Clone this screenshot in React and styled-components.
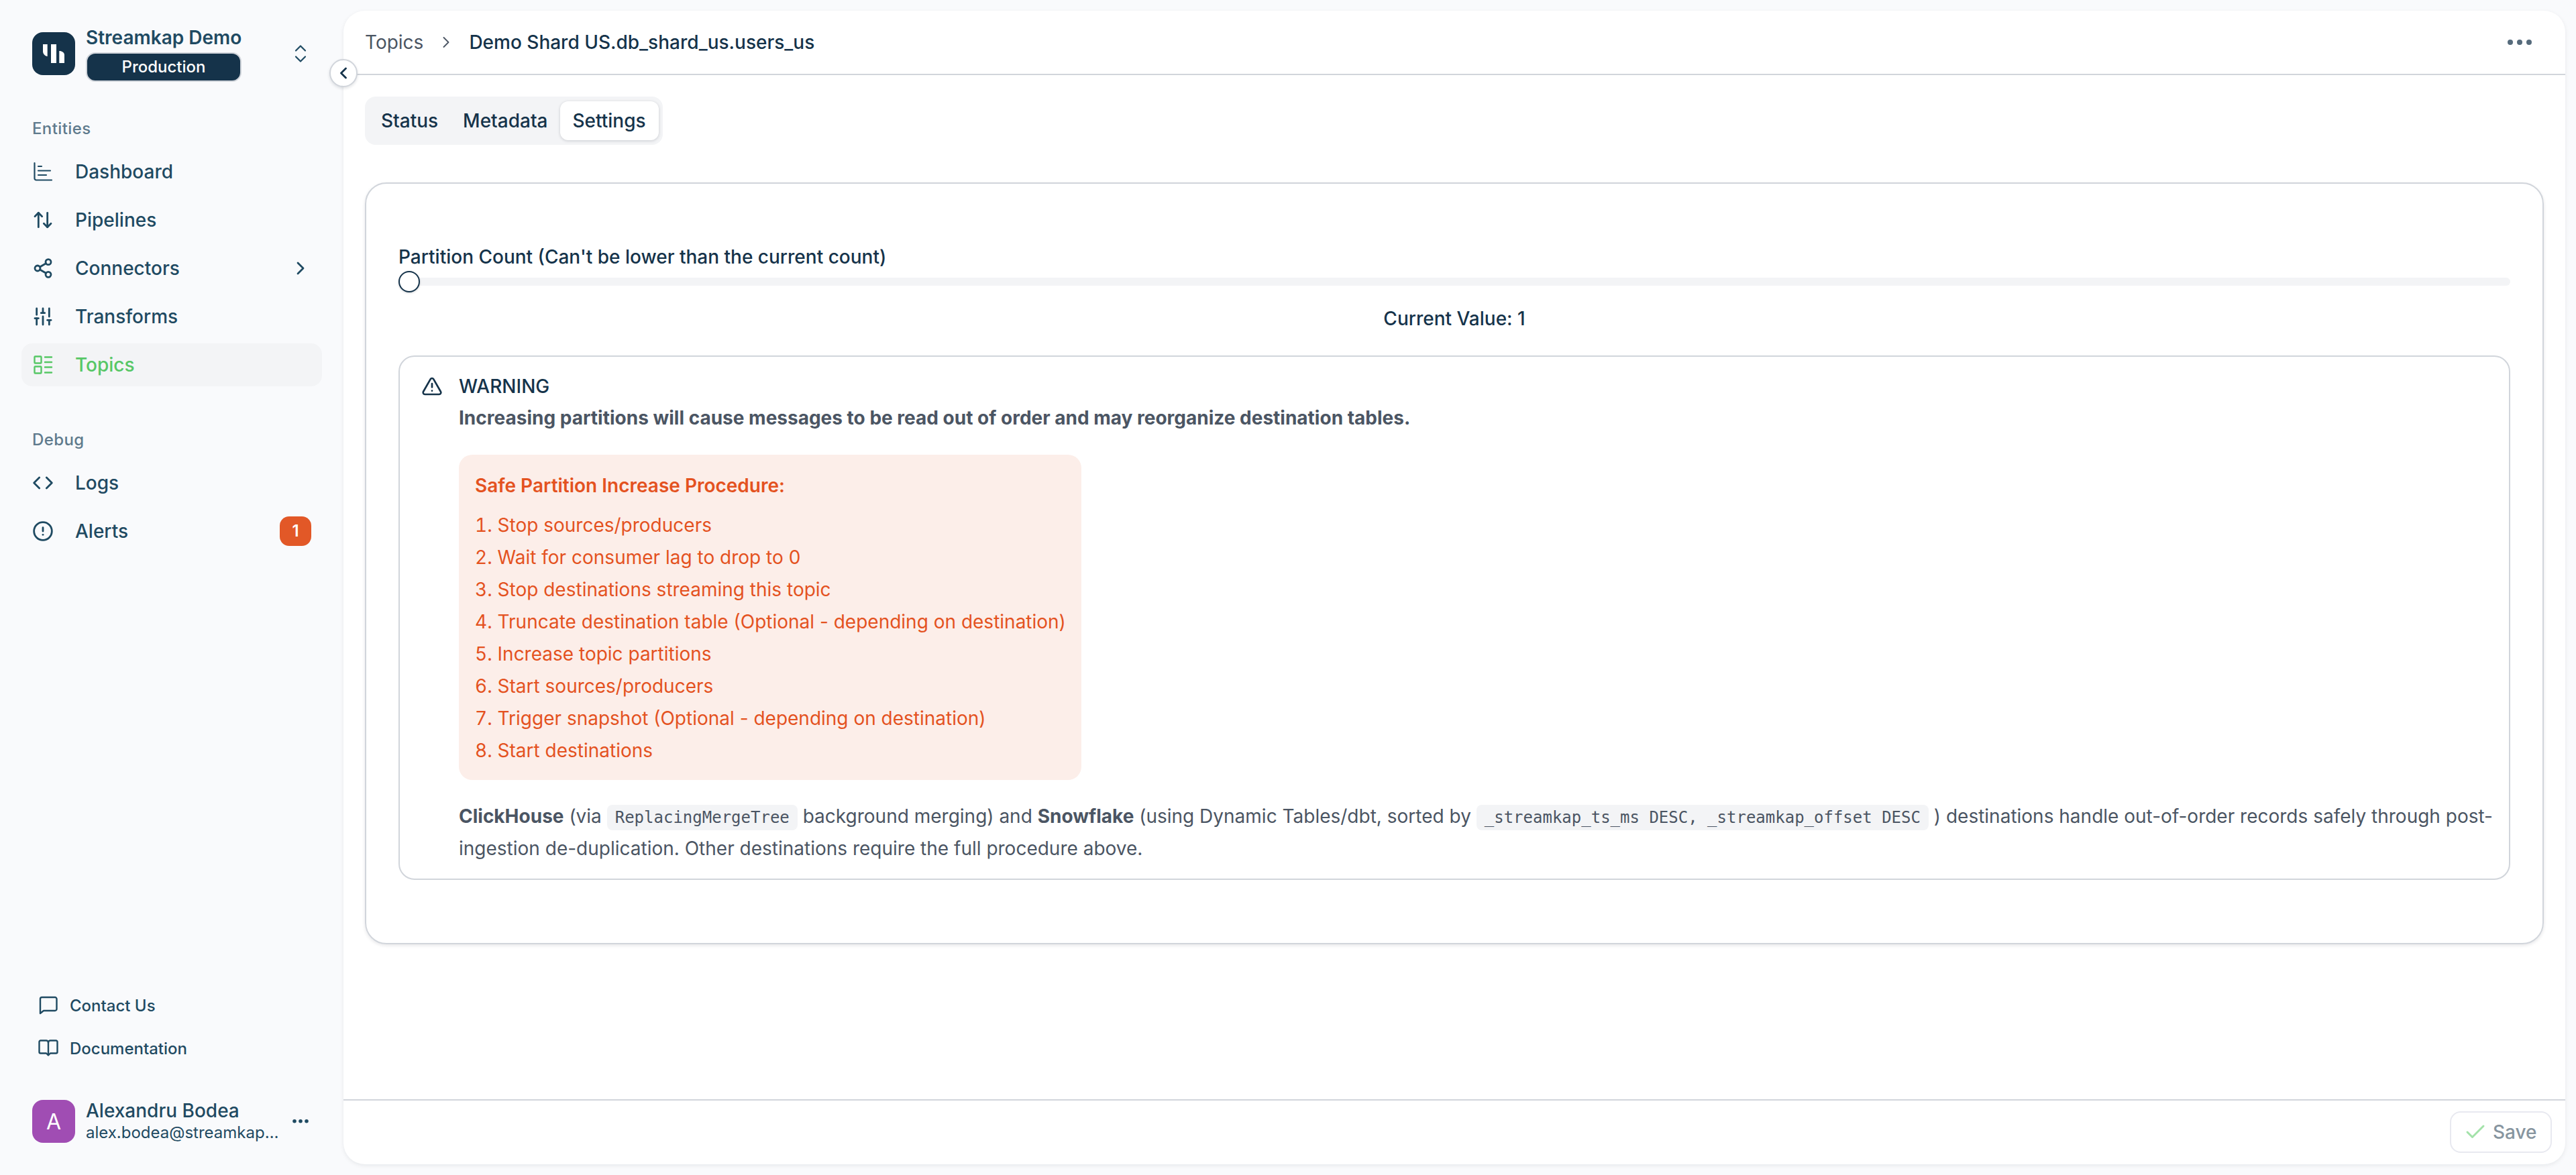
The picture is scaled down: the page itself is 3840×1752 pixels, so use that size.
import React from 'react';
import styled, { createGlobalStyle } from 'styled-components';
import {
  ArrowUpDown,
  Check,
  ChevronLeft,
  ChevronRight,
  CircleAlert,
  Code,
  SlidersVertical,
  Share2,
  TriangleAlert,
} from 'lucide-react';

const navy = '#1f4a62';
const dark = '#15334a';

const GlobalStyle = createGlobalStyle`
  html, body {
    margin: 0;
    padding: 0;
    background: #f9fafc;
    font-family: Inter, "Liberation Sans", sans-serif;
  }
  * { box-sizing: border-box; }
`;

const Shell = styled.div`
  position: relative;
  display: flex;
  width: 100%;
  height: 100vh;
  overflow: hidden;
  background: #f9fafc;
`;

const Sidebar = styled.aside`
  display: flex;
  flex-direction: column;
  flex: 0 0 512px;
  padding: 32px 32px 48px;
  color: ${navy};
`;

const Org = styled.div`
  display: flex;
  align-items: center;
  gap: 16px;
  padding: 0 16px;
  height: 96px;
  margin-bottom: 44px;
`;

const LogoBox = styled.div`
  flex: 0 0 64px;
  width: 64px;
  height: 64px;
  border-radius: 16px;
  background: ${(p) => p.$bg};
  color: #fff;
  display: flex;
  align-items: center;
  justify-content: center;
  font-size: 32px;
`;

const OrgText = styled.div`
  display: flex;
  flex-direction: column;
  width: 232px;
  margin-top: -2px;
`;

const OrgName = styled.div`
  font-size: 28px;
  line-height: 40px;
  font-weight: 600;
  white-space: nowrap;
  color: ${navy};
`;

const EnvBadge = styled.div`
  height: 44px;
  margin-top: 2px;
  border: 2px solid #d1d5db;
  border-radius: 14px;
  background: ${dark};
  color: #fff;
  font-size: 24px;
  font-weight: 500;
  line-height: 40px;
  text-align: center;
`;

const EndIcon = styled.div`
  margin-left: auto;
  display: flex;
  color: ${navy};
`;

const GroupLabel = styled.div`
  padding: 0 16px;
  height: 40px;
  margin-bottom: 12px;
  font-size: 24px;
  line-height: 40px;
  font-weight: 500;
  letter-spacing: 0.4px;
  color: #5f7a8c;
`;

const NavList = styled.nav`
  display: flex;
  flex-direction: column;
  gap: 8px;
  margin-bottom: ${(p) => p.$after}px;
`;

const NavItem = styled.div`
  display: flex;
  align-items: center;
  height: 64px;
  padding: 0 16px;
  gap: 32px;
  border-radius: 16px;
  font-size: 28px;
  font-weight: 500;
  background: ${(p) => (p.$active ? '#f3f4f6' : 'transparent')};
  color: ${(p) => (p.$active ? '#57c766' : navy)};
`;

const NavIcon = styled.span`
  flex: 0 0 32px;
  width: 32px;
  height: 32px;
  display: flex;
`;

const CountBadge = styled.span`
  margin-left: auto;
  width: 47px;
  height: 44px;
  border-radius: 14px;
  background: #e25827;
  color: #fff;
  font-size: 24px;
  font-weight: 600;
  line-height: 44px;
  text-align: center;
`;

const NavChevron = styled.span`
  margin-left: auto;
  display: flex;
`;

const Spacer = styled.div`
  flex: 1;
`;

const HelpLink = styled.div`
  display: flex;
  align-items: center;
  gap: 16px;
  height: 64px;
  padding-left: 24px;
  font-size: 24px;
  font-weight: 500;
  color: ${navy};
`;

const UserRow = styled.div`
  display: flex;
  align-items: center;
  gap: 16px;
  margin-top: 45px;
  padding: 0 16px;
  height: 64px;
`;

const UserText = styled.div`
  display: flex;
  flex-direction: column;
  width: 288px;
`;

const UserName = styled.div`
  font-size: 28px;
  line-height: 34px;
  font-weight: 500;
`;

const UserMail = styled.div`
  font-size: 24px;
  line-height: 32px;
  white-space: nowrap;
  overflow: hidden;
  text-overflow: ellipsis;
`;

const Main = styled.main`
  flex: 1;
  min-width: 0;
  display: flex;
  flex-direction: column;
  margin: 16px 16px 16px 0;
  background: #fff;
  border-radius: 32px;
  box-shadow: 0 2px 6px rgba(17, 24, 39, 0.08);
`;

const CollapseButton = styled.button`
  position: absolute;
  left: 491px;
  top: 88px;
  width: 42px;
  height: 42px;
  padding: 0;
  display: flex;
  align-items: center;
  justify-content: center;
  border: 2px solid #d1d5db;
  border-radius: 50%;
  background: #fff;
  color: ${dark};
  box-shadow: 0 2px 4px rgba(17, 24, 39, 0.12);
`;

const Header = styled.header`
  flex: 0 0 96px;
  display: flex;
  align-items: center;
  padding: 0 50px 0 32px;
  border-bottom: 2px solid #d1d5db;
  font-size: 28px;
`;

const Crumb = styled.span`
  color: #4b5563;
`;

const CrumbSep = styled.span`
  display: flex;
  margin: 0 20px;
  color: #4b5563;
`;

const CrumbCurrent = styled.span`
  font-weight: 500;
  color: ${dark};
`;

const HeaderMenu = styled.span`
  margin-left: auto;
  display: flex;
  color: #566b7c;
`;

const Content = styled.section`
  flex: 1;
  min-height: 0;
  padding: 32px;
`;

const Tabs = styled.div`
  display: inline-flex;
  align-items: center;
  height: 72px;
  padding: 0 6px;
  border-radius: 16px;
  background: #f3f4f6;
  margin-bottom: 56px;
  vertical-align: top;
`;

const Tab = styled.div`
  height: 58px;
  padding: 0 19px 0 18px;
  display: flex;
  align-items: center;
  border-radius: 12px;
  font-size: 28px;
  font-weight: 500;
  color: ${dark};
  background: ${(p) => (p.$active ? '#fff' : 'transparent')};
  box-shadow: ${(p) => (p.$active ? '0 1px 4px rgba(17, 24, 39, 0.18)' : 'none')};
`;

const Card = styled.div`
  height: 1136px;
  padding: 89px 48px 0;
  border: 2px solid #d1d5db;
  border-radius: 32px;
  box-shadow: 0 2px 5px rgba(17, 24, 39, 0.1);
`;

const FieldLabel = styled.div`
  font-size: 28px;
  line-height: 40px;
  font-weight: 500;
  color: ${dark};
`;

const Slider = styled.div`
  position: relative;
  height: 32px;
  display: flex;
  align-items: center;
  margin-top: 1px;
`;

const Track = styled.div`
  width: 100%;
  height: 12px;
  border-radius: 6px;
  background: #f3f4f6;
`;

const Thumb = styled.div`
  position: absolute;
  left: 0;
  top: 0;
  width: 32px;
  height: 32px;
  border: 2px solid ${dark};
  border-radius: 50%;
  background: #fff;
  box-shadow: 0 1px 3px rgba(17, 24, 39, 0.2);
`;

const CurrentValue = styled.div`
  margin-top: 19px;
  margin-bottom: 35px;
  font-size: 28px;
  line-height: 40px;
  font-weight: 500;
  text-align: center;
  color: ${dark};
`;

const Alert = styled.div`
  display: flex;
  gap: 24px;
  height: 782px;
  padding: 24px 20px 0 32px;
  border: 2px solid #d1d5db;
  border-radius: 24px;
`;

const AlertIcon = styled.div`
  flex: 0 0 32px;
  display: flex;
  align-items: center;
  height: 40px;
  color: ${dark};
`;

const AlertBody = styled.div`
  flex: 1;
  min-width: 0;
`;

const AlertTitle = styled.div`
  font-size: 28px;
  line-height: 40px;
  font-weight: 500;
  color: ${dark};
`;

const AlertLead = styled.div`
  margin-top: 7px;
  font-size: 28px;
  line-height: 40px;
  font-weight: 700;
  color: #4b5563;
`;

const Procedure = styled.div`
  width: 928px;
  height: 485px;
  margin-top: 35px;
  padding: 26px 24px 0;
  border-radius: 20px;
  background: #fceee9;
  color: #e4521f;
  font-size: 28px;
`;

const ProcedureTitle = styled.div`
  line-height: 40px;
  font-weight: 600;
  margin-bottom: 15px;
`;

const Steps = styled.ol`
  list-style: none;
  margin: 0;
  padding: 0;
`;

const Step = styled.li`
  line-height: 48px;
  white-space: nowrap;
`;

const StepNumber = styled.span`
  font-variant-numeric: tabular-nums;
`;

const Note = styled.p`
  margin: 31px 0 0;
  font-size: 28px;
  line-height: 46px;
  color: #4b5563;
`;

const Strong = styled.strong`
  font-weight: 700;
`;

const Mono = styled.code`
  padding: 5px 12px;
  border-radius: 8px;
  background: #f3f4f6;
  font-family: "DejaVu Sans Mono", "Liberation Mono", monospace;
  font-size: 24px;
`;

const Footer = styled.footer`
  flex: 0 0 97px;
  display: flex;
  align-items: flex-start;
  justify-content: flex-end;
  padding: 16px 20px 0 0;
  border-top: 2px solid #d1d5db;
`;

const SaveButton = styled.button`
  display: flex;
  align-items: center;
  gap: 8px;
  width: 152px;
  height: 62px;
  padding: 0 0 0 18px;
  border: 2px solid #e8e9f0;
  border-radius: 16px;
  background: #fff;
  font-family: inherit;
  font-size: 28px;
  font-weight: 500;
  color: #87959f;
`;

const LogoMark = () => (
  <svg width="64" height="64" viewBox="0 0 64 64" fill="#fff">
    <path d="M16 18h6.700v18c-3.700-.6-6.700-3.700-6.700-7.600z" />
    <rect x="28" y="18" width="8" height="28" />
    <path d="M40.300 28c4.300 0 7.700 2.500 7.700 6v12h-7.700z" />
  </svg>
);

const UpDownIcon = () => (
  <svg width="32" height="32" viewBox="0 0 32 32" fill="none" stroke="currentColor" strokeWidth="2.2" strokeLinecap="round" strokeLinejoin="round">
    <path d="M9 11.500l7-7 7 7" />
    <path d="M9 20.500l7 7 7-7" />
  </svg>
);

const BarsIcon = () => (
  <svg width="32" height="32" viewBox="0 0 32 32" fill="none" stroke="currentColor" strokeWidth="2.2" strokeLinecap="round">
    <path d="M3.500 3v23a2.500 2.500 0 0 0 2.500 2.500h23" />
    <path d="M9 8h5M9 14.500h18M9 21h12" />
  </svg>
);

const TopicsIcon = () => (
  <svg width="32" height="32" viewBox="0 0 32 32" fill="none" stroke="currentColor" strokeWidth="2.4" strokeLinecap="round">
    <rect x="3.500" y="3.500" width="10" height="10" rx="1" />
    <rect x="3.500" y="18.500" width="10" height="10" rx="1" />
    <path d="M19 4.500h10M19 12h10M19 19.500h10M19 27.500h10" />
  </svg>
);

const ChatIcon = () => (
  <svg width="32" height="32" viewBox="0 0 32 32" fill="none" stroke="currentColor" strokeWidth="2.4" strokeLinejoin="round">
    <path d="M4 28V6.500A2.500 2.500 0 0 1 6.500 4h19.500a2.500 2.500 0 0 1 2.500 2.500v15a2.500 2.500 0 0 1-2.500 2.500H9z" />
  </svg>
);

const BookIcon = () => (
  <svg width="32" height="32" viewBox="0 0 32 32" fill="none" stroke="currentColor" strokeWidth="2.4" strokeLinejoin="round" strokeLinecap="round">
    <path d="M16 7.500a3 3 0 0 0-3-3H4.500a2 2 0 0 0-2 2v15a2 2 0 0 0 2 2H13l3 3 3-3h8.500a2 2 0 0 0 2-2v-15a2 2 0 0 0-2-2H19a3 3 0 0 0-3 3z" />
    <path d="M16 7.500v18" />
  </svg>
);

const DotsIcon = ({ width, r, step }) => (
  <svg width={width} height={r * 2 + 4} viewBox={`0 0 ${width} ${r * 2 + 4}`} fill="currentColor">
    <circle cx={width / 2 - step} cy={r + 2} r={r} />
    <circle cx={width / 2} cy={r + 2} r={r} />
    <circle cx={width / 2 + step} cy={r + 2} r={r} />
  </svg>
);

const navIcon = (Icon) => <Icon size={32} strokeWidth={2.1} />;

const steps = [
  'Stop sources/producers',
  'Wait for consumer lag to drop to 0',
  'Stop destinations streaming this topic',
  'Truncate destination table (Optional - depending on destination)',
  'Increase topic partitions',
  'Start sources/producers',
  'Trigger snapshot (Optional - depending on destination)',
  'Start destinations',
];

const App = () => (
  <Shell>
    <GlobalStyle />
    <Sidebar>
      <Org>
        <LogoBox $bg={dark}>
          <LogoMark />
        </LogoBox>
        <OrgText>
          <OrgName>Streamkap Demo</OrgName>
          <EnvBadge>Production</EnvBadge>
        </OrgText>
        <EndIcon>
          <UpDownIcon />
        </EndIcon>
      </Org>

      <GroupLabel>Entities</GroupLabel>
      <NavList $after={60}>
        <NavItem><NavIcon><BarsIcon /></NavIcon>Dashboard</NavItem>
        <NavItem><NavIcon>{navIcon(ArrowUpDown)}</NavIcon>Pipelines</NavItem>
        <NavItem>
          <NavIcon>{navIcon(Share2)}</NavIcon>Connectors
          <NavChevron><ChevronRight size={32} strokeWidth={2.1} /></NavChevron>
        </NavItem>
        <NavItem><NavIcon>{navIcon(SlidersVertical)}</NavIcon>Transforms</NavItem>
        <NavItem $active><NavIcon><TopicsIcon /></NavIcon>Topics</NavItem>
      </NavList>

      <GroupLabel>Debug</GroupLabel>
      <NavList $after={0}>
        <NavItem><NavIcon>{navIcon(Code)}</NavIcon>Logs</NavItem>
        <NavItem>
          <NavIcon>{navIcon(CircleAlert)}</NavIcon>Alerts
          <CountBadge>1</CountBadge>
        </NavItem>
      </NavList>

      <Spacer />

      <HelpLink><ChatIcon />Contact Us</HelpLink>
      <HelpLink><BookIcon />Documentation</HelpLink>

      <UserRow>
        <LogoBox $bg="#a04db3">A</LogoBox>
        <UserText>
          <UserName>Alexandru Bodea</UserName>
          <UserMail>alex.bodea@streamkap.com</UserMail>
        </UserText>
        <DotsIcon width={32} r={2.8} step={9} />
      </UserRow>
    </Sidebar>

    <Main>
      <Header>
        <Crumb>Topics</Crumb>
        <CrumbSep><ChevronRight size={28} strokeWidth={1.6} /></CrumbSep>
        <CrumbCurrent>Demo Shard US.db_shard_us.users_us</CrumbCurrent>
        <HeaderMenu><DotsIcon width={36} r={4} step={14} /></HeaderMenu>
      </Header>

      <Content>
        <Tabs>
          <Tab>Status</Tab>
          <Tab>Metadata</Tab>
          <Tab $active>Settings</Tab>
        </Tabs>

        <Card>
          <FieldLabel>Partition Count (Can't be lower than the current count)</FieldLabel>
          <Slider>
            <Track />
            <Thumb />
          </Slider>
          <CurrentValue>Current Value: 1</CurrentValue>

          <Alert>
            <AlertIcon><TriangleAlert size={32} strokeWidth={2} /></AlertIcon>
            <AlertBody>
              <AlertTitle>WARNING</AlertTitle>
              <AlertLead>
                Increasing partitions will cause messages to be read out of order and may reorganize destination tables.
              </AlertLead>
              <Procedure>
                <ProcedureTitle>Safe Partition Increase Procedure:</ProcedureTitle>
                <Steps>
                  {steps.map((step, i) => (
                    <Step key={step}><StepNumber>{i + 1}.</StepNumber> {step}</Step>
                  ))}
                </Steps>
              </Procedure>
              <Note>
                <Strong>ClickHouse</Strong> (via <Mono>ReplacingMergeTree</Mono> background merging) and{' '}
                <Strong>Snowflake</Strong> (using Dynamic Tables/dbt, sorted by{' '}
                <Mono>_streamkap_ts_ms DESC, _streamkap_offset DESC</Mono> ) destinations handle out-of-order records
                safely through post-ingestion de-duplication. Other destinations require the full procedure above.
              </Note>
            </AlertBody>
          </Alert>
        </Card>
      </Content>

      <Footer>
        <SaveButton>
          <Check size={36} strokeWidth={2} color="#a3e2a9" />
          Save
        </SaveButton>
      </Footer>
    </Main>

    <CollapseButton>
      <ChevronLeft size={28} strokeWidth={2.4} />
    </CollapseButton>
  </Shell>
);

export default App;
